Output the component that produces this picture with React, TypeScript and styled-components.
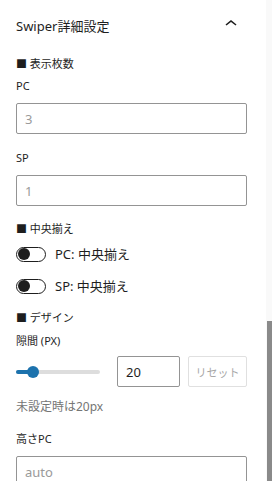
import { createGlobalStyle } from 'styled-components';
import styled from 'styled-components';

const GlobalStyle = createGlobalStyle`
  html, body {
    margin: 0;
    padding: 0;
    background: #fff;
    overflow: hidden;
  }
  body {
    font-family: "Noto Sans", "Noto Sans CJK JP", sans-serif;
    color: #1e1e1e;
  }
  * { box-sizing: border-box; }
`;

export default function App() {
  return (
    <Page>
      <GlobalStyle />
      <Panel>
        <Header>
          <Title>Swiper詳細設定</Title>
          <svg width="24" height="24" viewBox="0 0 24 24" aria-hidden="true">
            <path d="M6.5 12.4L12 8l5.5 4.4-.9 1.2L12 10l-4.5 3.6-1-1.2z" fill="#1e1e1e" />
          </svg>
        </Header>
        <Body>
          <Heading>■ 表示枚数</Heading>
          <Label $top={6}>PC</Label>
          <TextInput placeholder="3" />
          <Label $top={16}>SP</Label>
          <TextInput placeholder="1" />

          <Heading $top={15}>■ 中央揃え</Heading>
          <ToggleRow $top={7}>
            <Toggle />
            <ToggleText>PC: 中央揃え</ToggleText>
          </ToggleRow>
          <ToggleRow $top={12}>
            <Toggle />
            <ToggleText>SP: 中央揃え</ToggleText>
          </ToggleRow>

          <Heading $top={14}>■ デザイン</Heading>
          <Label $top={7} $bottom={7}>隙間 (PX)</Label>
          <RangeRow>
            <Slider>
              <SliderFill style={{ width: '17px' }} />
              <SliderKnob />
            </Slider>
            <NumberBox defaultValue="20" />
            <ResetButton>リセット</ResetButton>
          </RangeRow>
          <Help>未設定時は20px</Help>
          <Label $top={16}>高さPC</Label>
          <TextInput placeholder="auto" />
        </Body>
      </Panel>
      <ScrollRail>
        <RailSpace />
        <RailThumb />
      </ScrollRail>
    </Page>
  );
}

const Page = styled.div`
  display: flex;
  width: 272px;
  height: 481px;
  overflow: hidden;
`;

const Panel = styled.div`
  width: 266px;
  flex-shrink: 0;
`;

const Header = styled.div`
  height: 52px;
  display: flex;
  align-items: center;
  justify-content: space-between;
  padding: 0 23px 0 16px;
  svg {
    margin-top: -4px;
  }
`;

const Title = styled.div`
  font-size: 13px;
  font-weight: 400;
  line-height: 16px;
`;

const Body = styled.div`
  padding: 4px 19px 0 16px;
  display: flex;
  flex-direction: column;
`;

const Heading = styled.div<{ $top?: number }>`
  font-size: 11px;
  line-height: 16px;
  font-weight: 400;
  margin-top: ${(p) => p.$top ?? 0}px;
`;

const Label = styled.div<{ $top?: number; $bottom?: number }>`
  font-size: 11px;
  line-height: 16px;
  font-weight: 400;
  margin-top: ${(p) => p.$top ?? 0}px;
  margin-bottom: ${(p) => p.$bottom ?? 9}px;
`;

const TextInput = styled.input`
  width: 100%;
  height: 31px;
  border: 1px solid #949494;
  border-radius: 2px;
  padding: 0 8px;
  font-family: inherit;
  font-size: 13px;
  color: #1e1e1e;
  outline: none;
  &::placeholder {
    color: #9a9a9a;
  }
`;

const ToggleRow = styled.div<{ $top?: number }>`
  display: flex;
  align-items: center;
  height: 20px;
  margin-top: ${(p) => p.$top ?? 0}px;
`;

const Toggle = styled.span`
  position: relative;
  width: 30px;
  height: 15px;
  border: 1px solid #1e1e1e;
  border-radius: 8px;
  flex-shrink: 0;
  &::after {
    content: '';
    position: absolute;
    left: 1px;
    top: 0.5px;
    width: 12px;
    height: 12px;
    border-radius: 50%;
    background: #1e1e1e;
  }
`;

const ToggleText = styled.span`
  margin-left: 9px;
  font-size: 13px;
  line-height: 16px;
`;

const RangeRow = styled.div`
  display: flex;
  align-items: center;
  height: 31px;
`;

const Slider = styled.div`
  position: relative;
  width: 84px;
  height: 4px;
  border-radius: 2px;
  background: #dddddd;
  flex-shrink: 0;
`;

const SliderFill = styled.div`
  height: 4px;
  border-radius: 2px;
  background: #1c72ad;
`;

const SliderKnob = styled.div`
  position: absolute;
  left: 11px;
  top: -4px;
  width: 12px;
  height: 12px;
  border-radius: 50%;
  background: #1c72ad;
`;

const NumberBox = styled.input`
  width: 63px;
  height: 31px;
  margin-left: 17px;
  border: 1px solid #949494;
  border-radius: 2px;
  padding: 0 8px;
  font-family: inherit;
  font-size: 13px;
  color: #1e1e1e;
  outline: none;
`;

const ResetButton = styled.button`
  width: 59px;
  height: 31px;
  margin-left: 8px;
  border: 1px solid #e0e0e0;
  border-radius: 2px;
  background: #fff;
  font-family: inherit;
  font-size: 11px;
  color: #a7a7a7;
  padding: 0;
`;

const Help = styled.div`
  margin-top: 12px;
  font-size: 12px;
  line-height: 16px;
  color: #757575;
`;

const ScrollRail = styled.div`
  width: 6px;
  display: flex;
  flex-direction: column;
  background: #f9f9f9;
`;

const RailSpace = styled.div`
  height: 321px;
`;

const RailThumb = styled.div`
  flex: 1;
  margin-left: 1px;
  background: #8a8a8a;
`;
